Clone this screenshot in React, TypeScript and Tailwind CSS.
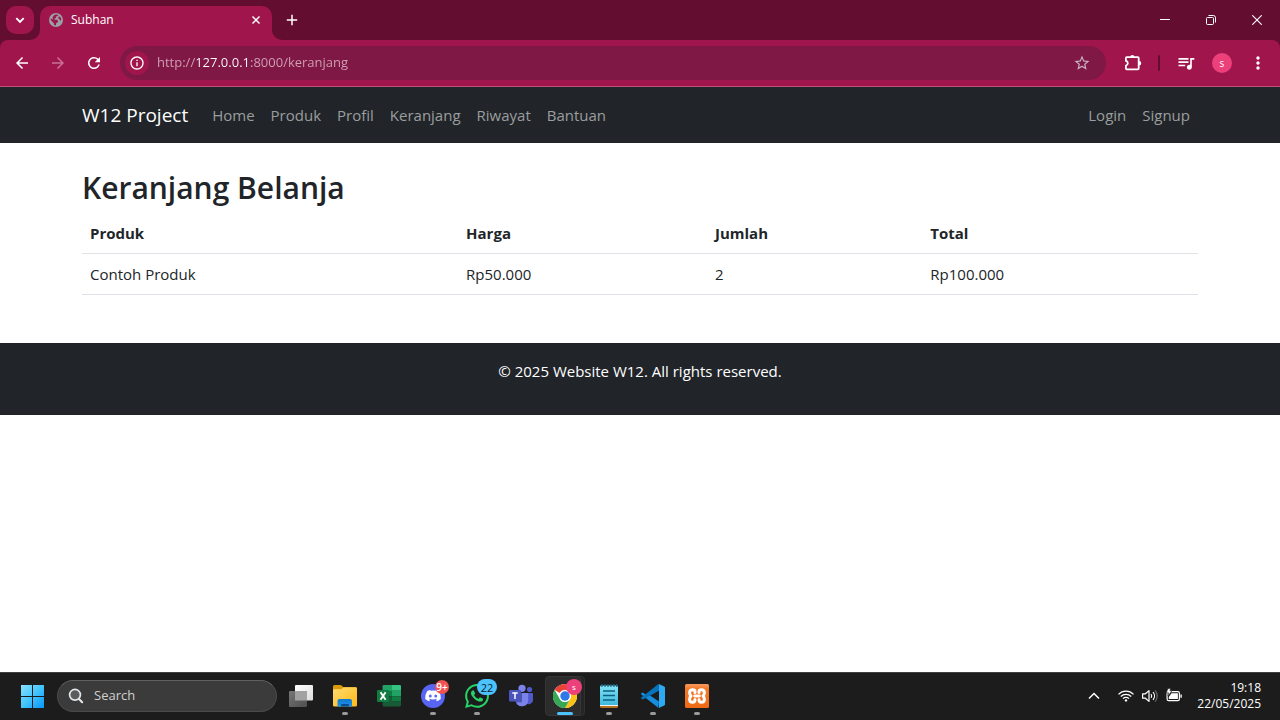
import type { ReactNode } from "react";
import { MdArrowBack, MdArrowForward, MdRefresh, MdInfoOutline, MdStarBorder, MdQueueMusic, MdMoreVert } from "react-icons/md";

function GlobeIcon() {
  return (
    <svg viewBox="0 0 14 14" className="size-3.5 shrink-0" aria-hidden="true">
      <circle cx="7" cy="7" r="7" fill="#9aa0a6" />
      <path
        d="M7.4 1.4 9.2 1.7 8.6 3.2 6.8 3.6 7 5 5.4 5.8 5.6 6.8 8.2 6.8 9.2 8.2 8.2 9.8 7.2 10 7 12.4 5.2 12 4.8 10.2 1.7 6.9 1.9 5.4 4 6.4 3.4 4.4 5.4 1.8ZM9.4 4 11 3.4 12.4 6 11.8 7.4 10.6 7.2 10.4 5.8 9.2 5.4Z"
        fill="#a1154d"
      />
    </svg>
  );
}

function PuzzleIcon() {
  return (
    <svg viewBox="0 0 20 20" className="size-5" fill="none" stroke="currentColor" aria-hidden="true">
      <path
        d="M4.7 4.2H15.8Q16.7 4.2 16.7 5.1V15.4Q16.7 16.3 15.8 16.3H4.7Q3.9 16.3 3.9 15.4V12.6A2.4 2.4 0 0 0 3.9 7.9V5.1Q3.9 4.2 4.7 4.2Z"
        strokeWidth="1.8"
        strokeLinejoin="round"
      />
      <path d="M8.2 4A2.1 2.1 0 0 1 12.4 4ZM17 8A2.2 2.2 0 0 1 17 12.5Z" fill="currentColor" stroke="none" />
    </svg>
  );
}

function WindowsIcon() {
  return (
    <svg viewBox="0 0 24 24" className="size-6" aria-hidden="true">
      <defs>
        <linearGradient id="win" x1="0" y1="0" x2="24" y2="24" gradientUnits="userSpaceOnUse">
          <stop stopColor="#8fe3ff" />
          <stop offset=".5" stopColor="#45c6fd" />
          <stop offset="1" stopColor="#0796fb" />
        </linearGradient>
      </defs>
      <path d="M1 1h11v11H1zM13 1h11v11H13zM1 13h11v11H1zM13 13h11v11H13z" fill="url(#win)" />
    </svg>
  );
}

function SearchIcon() {
  return (
    <svg viewBox="0 0 16 16" className="size-4" fill="none" stroke="#e4e6e8" aria-hidden="true">
      <circle cx="7" cy="6.8" r="5.4" fill="#5a5c5e" strokeWidth="1.7" />
      <path d="m11 11 3.2 3.3" strokeWidth="2" strokeLinecap="round" />
    </svg>
  );
}

function TaskViewIcon() {
  return (
    <svg viewBox="0 0 24 24" className="size-6" aria-hidden="true">
      <defs>
        <linearGradient id="tvw" x1="0" y1="0" x2="1" y2="1">
          <stop stopColor="#fff" />
          <stop offset="1" stopColor="#dcdcdc" />
        </linearGradient>
        <linearGradient id="tvg" x1="0" y1="0" x2="1" y2="1">
          <stop stopColor="#777" />
          <stop offset="1" stopColor="#4e4e4e" />
        </linearGradient>
      </defs>
      <rect x="6" y="1" width="18" height="15.5" rx="1" fill="url(#tvw)" />
      <rect y="7" width="18" height="16" rx="1" fill="url(#tvg)" />
      <path d="M6 7h12v9.5H6z" fill="#a2a2a2" />
    </svg>
  );
}

function FolderIcon() {
  return (
    <svg viewBox="0 0 24 24" className="size-6" aria-hidden="true">
      <defs>
        <linearGradient id="fold" x1="0" y1="0" x2="1" y2="1">
          <stop stopColor="#ffdc70" />
          <stop offset="1" stopColor="#fcb917" />
        </linearGradient>
        <linearGradient id="foldb" x1="0" y1="0" x2="0" y2="1">
          <stop stopColor="#0f78d0" />
          <stop offset="1" stopColor="#2192e4" />
        </linearGradient>
      </defs>
      <path d="M0 8V2.5Q0 1 1.5 1H7.4Q8 1 8.5 1.5L10.5 3.3H22.5Q24 3.3 24 4.8V8Z" fill="#dc9a0b" />
      <path d="M0 6.2Q0 5.2 1 5.2H8.5L10.5 3.3H22.7Q24 3.3 24 4.6V21.3Q24 22.6 22.7 22.6H1.3Q0 22.6 0 21.3Z" fill="url(#fold)" />
      <path d="M4.5 22.6V17Q4.5 15 6.5 15H17Q19 15 19 17V22.6Z" fill="url(#foldb)" />
      <path d="M8 22.6V21Q8 20 9 20H15Q16 20 16 21V22.6Z" fill="#0a4d91" />
    </svg>
  );
}

function ExcelIcon() {
  return (
    <svg viewBox="0 0 24 24" className="size-6" aria-hidden="true">
      <path d="M7 1H15V12H5.6V2.3Q5.6 1 7 1Z" fill="#21a366" />
      <path d="M15 1H22.7Q24 1 24 2.3V6.8H15Z" fill="#33c481" />
      <path d="M15 6.8h9v5.4h-9z" fill="#21a366" />
      <path d="M5.6 6.8H15v5.4H5.6z" fill="#107c41" />
      <path d="M15 12.2h9v5.4h-9z" fill="#107c41" />
      <path d="M5.6 12.2H15V17.6H24V21.3Q24 22.6 22.7 22.6H7Q5.6 22.6 5.6 21.3Z" fill="#185c37" />
      <rect y="6" width="12" height="12" rx="1" fill="#107c41" />
      <path d="M3.5 8.3 8.6 15.7M8.6 8.3 3.5 15.7" stroke="#fff" strokeWidth="1.9" />
    </svg>
  );
}

function DiscordIcon() {
  return (
    <svg viewBox="0 0 24 24" className="size-6" aria-hidden="true">
      <circle cx="12" cy="12" r="12" fill="#5865f2" />
      <path
        d="M9.7 6.7 9.3 6Q7.4 6.3 6.2 7Q4 10.4 4.2 15.1 5.8 16.6 8.2 17.2L9.1 15.7 7.8 15.1 8.2 14.8Q12 16.4 15.8 14.8L16.2 15.1 14.9 15.7 15.8 17.2Q18.2 16.6 19.8 15.1 20 10.4 17.8 7 16.6 6.3 14.7 6L14.3 6.7Q12 6.3 9.7 6.7Z"
        fill="#fff"
      />
      <ellipse cx="9.3" cy="12" rx="1.4" ry="1.6" fill="#5865f2" />
      <ellipse cx="14.7" cy="12" rx="1.4" ry="1.6" fill="#5865f2" />
    </svg>
  );
}

function WhatsAppIcon() {
  return (
    <svg viewBox="0 0 24 24" className="size-6" aria-hidden="true">
      <path
        d="M17.472 14.382c-.297-.149-1.758-.867-2.03-.967-.273-.099-.471-.148-.67.15-.197.297-.767.966-.94 1.164-.173.199-.347.223-.644.075-.297-.15-1.255-.463-2.39-1.475-.883-.788-1.48-1.761-1.653-2.059-.173-.297-.018-.458.13-.606.134-.133.298-.347.446-.52.149-.174.198-.298.298-.497.099-.198.05-.371-.025-.52-.075-.149-.669-1.612-.916-2.207-.242-.579-.487-.5-.669-.51-.173-.008-.371-.01-.57-.01-.198 0-.52.074-.792.372-.272.297-1.04 1.016-1.04 2.479 0 1.462 1.065 2.875 1.213 3.074.149.198 2.096 3.2 5.077 4.487.709.306 1.262.489 1.694.625.712.227 1.36.195 1.871.118.571-.085 1.758-.719 2.006-1.413.248-.694.248-1.289.173-1.413-.074-.124-.272-.198-.57-.347m-5.421 7.403h-.004a9.87 9.87 0 01-5.031-1.378l-.361-.214-3.741.982.998-3.648-.235-.374a9.86 9.86 0 01-1.51-5.26c.001-5.45 4.436-9.884 9.888-9.884 2.64 0 5.122 1.03 6.988 2.898a9.825 9.825 0 012.893 6.994c-.003 5.45-4.437 9.884-9.885 9.884m8.413-18.297A11.815 11.815 0 0012.05 0C5.495 0 .16 5.335.157 11.892c0 2.096.547 4.142 1.588 5.945L.057 24l6.305-1.654a11.882 11.882 0 005.683 1.448h.005c6.554 0 11.89-5.335 11.893-11.893a11.821 11.821 0 00-3.48-8.413z"
        fill="#25d366"
      />
    </svg>
  );
}

function TeamsIcon() {
  return (
    <svg viewBox="0 0 24 24" className="size-6" aria-hidden="true">
      <circle cx="20.5" cy="5.5" r="2.6" fill="#5059c9" />
      <path d="M15 9H23Q24 9 24 10V15.5A4.2 4.2 0 0 1 15.6 16.5Z" fill="#5059c9" />
      <circle cx="13" cy="4.3" r="3.6" fill="#7b83eb" />
      <path d="M6.8 9H18.4Q19.2 9 19.2 9.8V16.2A6.3 6.3 0 0 1 6.8 17.5Z" fill="#7b83eb" />
      <path d="M6.8 9H13V18.2H6.9Z" fill="#4d55b2" />
      <rect y="6" width="12" height="11.5" rx="1" fill="#4b53bc" />
      <path d="M3.3 9.1H8.7M6 9.1V15" stroke="#fff" strokeWidth="1.5" />
    </svg>
  );
}

function ChromeIcon() {
  return (
    <svg viewBox="0 0 24 24" className="size-6" aria-hidden="true">
      <circle cx="12" cy="12" r="12" fill="#fff" />
      <path d="M12 0A12 12 0 0 1 22.4 6H12A6 6 0 0 0 6.8 9L1.6 6A12 12 0 0 1 12 0Z" fill="#ea4335" />
      <path d="M22.4 6A12 12 0 0 1 12 24L17.2 15A6 6 0 0 0 17.2 9L12 6Z" fill="#fbc116" />
      <path d="M12 24A12 12 0 0 1 1.6 6L6.8 15A6 6 0 0 0 17.2 15Z" fill="#34a853" />
      <circle cx="12" cy="12" r="6" fill="#fff" />
      <circle cx="12" cy="12" r="4.7" fill="#2e78ea" />
    </svg>
  );
}

function NotepadIcon() {
  return (
    <svg viewBox="0 0 24 24" className="size-6" aria-hidden="true">
      <defs>
        <linearGradient id="note" x1="0" y1="0" x2="0" y2="1">
          <stop stopColor="#83e3f4" />
          <stop offset="1" stopColor="#3fb9dc" />
        </linearGradient>
      </defs>
      <path d="M3 19H21V22.5Q21 24 19.5 24H4.5Q3 24 3 22.5Z" fill="#b5701d" />
      <path d="M3 19h18v3H3z" fill="#f2f3f4" />
      <path d="M4.3 1.5H19.7Q21 1.5 21 2.8V21H3V2.8Q3 1.5 4.3 1.5Z" fill="url(#note)" />
      <path d="M5 0V3M8 0V3M11 0V3M14 0V3M17 0V3M19.7 0V3" stroke="#12678a" strokeWidth="1.2" />
      <path d="M6 7H18M6 11.5H18M6 16H18" stroke="#0b5f86" strokeWidth="1.7" />
    </svg>
  );
}

function VsCodeIcon() {
  return (
    <svg viewBox="0 0 24 24" className="size-6" aria-hidden="true">
      <path d="M17.4.2 5.6 11.3 1.9 8.5.3 9.3Q-.2 9.8.3 10.4L17.2 23.8 18 17.6 9 11.5 18 6.3Z" fill="#168edb" />
      <path d="M17.4.2 5.6 11.3 0 15.5.3 13.6 1.9 15.5 18 6.3V0Z" fill="none" />
      <path d="M17.2.2.3 13.6Q-.2 14.2.3 14.7L1.9 15.5 18 6.4Z" fill="#0873bd" />
      <path d="M17.2.2Q17.8-.1 18.4.2L23.2 2.5Q24 2.9 24 3.8V20.2Q24 21.1 23.2 21.5L18.4 23.8Q17.8 24.1 17.2 23.8 18 23.7 18 22.7V1.3Q18 .3 17.2.2Z" fill="#2eaaf3" />
    </svg>
  );
}

function XamppIcon() {
  return (
    <svg viewBox="0 0 24 24" className="size-6" aria-hidden="true">
      <defs>
        <linearGradient id="xam" x1="0" y1="0" x2="0" y2="1">
          <stop stopColor="#f79a5e" />
          <stop offset=".2" stopColor="#f37a2b" />
          <stop offset="1" stopColor="#ee6a14" />
        </linearGradient>
      </defs>
      <rect width="24" height="24" rx="1.5" fill="url(#xam)" />
      <g fill="none" stroke="#fff" strokeWidth="3" strokeLinecap="round" strokeLinejoin="round">
        <path d="M10 8.6V7.6Q10 5.8 7.6 5.8 4.6 5.8 4.6 8.8 4.6 10.8 6 12 4.6 13.2 4.6 15.2 4.6 18.2 7.6 18.2 10 18.2 10 16V15.4" />
        <path d="M14 8.6V7.6Q14 5.8 16.4 5.8 19.4 5.8 19.4 8.8 19.4 10.8 18 12 19.4 13.2 19.4 15.2 19.4 18.2 16.4 18.2 14 18.2 14 16V15.4" />
        <path d="M9.6 12H14.4" strokeWidth="2.8" />
      </g>
    </svg>
  );
}

type TaskItemProps = { label: string; icon: ReactNode; state?: "idle" | "open" | "active"; badge?: ReactNode };

function TaskItem({ label, icon, state = "idle", badge }: TaskItemProps) {
  return (
    <button type="button" aria-label={label} className="relative flex h-12 w-11 items-center justify-center">
      {state === "active" && (
        <>
          <span className="absolute top-1 right-0.5 bottom-1 left-6 rounded-sm border border-[#303030] bg-[#252525]" />
          <span className="absolute top-1 right-1.5 bottom-1 left-0.5 rounded-sm border border-[#363636] bg-[#2c2c2c]" />
        </>
      )}
      <span className="relative">{icon}</span>
      {badge}
      {state === "open" && <span className="absolute bottom-[5px] left-1/2 h-[3px] w-1.5 -translate-x-1/2 rounded-full bg-[#9a9a9a]" />}
      {state === "active" && <span className="absolute bottom-[5px] left-1/2 h-[3px] w-4 -translate-x-1/2 rounded-full bg-[#4cc2ff]" />}
    </button>
  );
}

function TabStrip() {
  return (
    <div className="flex h-10 items-start bg-[#630d31] text-white">
      <button type="button" aria-label="Search tabs" className="mt-1.5 ml-1.5 flex size-7 items-center justify-center rounded-[10px] bg-[#a1154d]">
        <svg viewBox="0 0 10 10" className="size-2.5" fill="none" stroke="currentColor" strokeWidth="1.9" aria-hidden="true">
          <path d="m1.3 3.2 3.7 3.7 3.7-3.7" />
        </svg>
      </button>
      <div className="relative mt-1.5 ml-1.5 flex h-[34px] w-58 items-center rounded-t-[10px] bg-[#a1154d] pr-2 pb-1.5 pl-[9px]">
        <svg viewBox="0 0 10 10" className="absolute bottom-0 -left-2.5 size-2.5" aria-hidden="true">
          <path d="M10 0V10H0A10 10 0 0 0 10 0Z" fill="#a1154d" />
        </svg>
        <svg viewBox="0 0 10 10" className="absolute -right-2.5 bottom-0 size-2.5" aria-hidden="true">
          <path d="M0 0V10H10A10 10 0 0 1 0 0Z" fill="#a1154d" />
        </svg>
        <GlobeIcon />
        <span className="ml-2 flex-1 text-xs">Subhan</span>
        <button type="button" aria-label="Close tab" className="flex size-4 items-center justify-center">
          <svg viewBox="0 0 10 10" className="size-2.5" stroke="currentColor" strokeWidth="1.5" aria-hidden="true">
            <path d="m1.5 1.5 7 7m0-7-7 7" />
          </svg>
        </button>
      </div>
      <button type="button" aria-label="New tab" className="mt-1.5 ml-1.5 flex size-7 items-center justify-center">
        <svg viewBox="0 0 12 12" className="size-3" stroke="currentColor" strokeWidth="1.5" aria-hidden="true">
          <path d="M6 .8v10.4M.8 6h10.4" />
        </svg>
      </button>
      <div className="ml-auto flex h-10">
        <button type="button" aria-label="Minimize" className="flex w-[46px] items-center justify-center">
          <svg viewBox="0 0 10 10" className="size-2.5" stroke="currentColor" aria-hidden="true">
            <path d="M0 4.5h10" />
          </svg>
        </button>
        <button type="button" aria-label="Restore" className="flex w-[46px] items-center justify-center">
          <svg viewBox="0 0 10 10" className="size-2.5" fill="none" stroke="currentColor" aria-hidden="true">
            <rect x=".5" y="2.5" width="7" height="7" rx="1" />
            <path d="M2.5 .5H7.3Q9.5 .5 9.5 2.7V7.5" />
          </svg>
        </button>
        <button type="button" aria-label="Close" className="flex w-[46px] items-center justify-center">
          <svg viewBox="0 0 10 10" className="size-2.5" stroke="currentColor" strokeWidth="1.1" aria-hidden="true">
            <path d="m.3.3 9.4 9.4m0-9.4L.3 9.7" />
          </svg>
        </button>
      </div>
    </div>
  );
}

function Toolbar() {
  return (
    <div className="bg-[#630d31]">
      <div className="flex h-[47px] items-center rounded-t-lg border-b border-[#bd5279] bg-[#a1154d] px-1 text-white">
        <button type="button" aria-label="Back" className="flex size-9 items-center justify-center">
          <MdArrowBack className="size-[18px]" />
        </button>
        <button type="button" aria-label="Forward" disabled className="flex size-9 items-center justify-center text-[#c87094]">
          <MdArrowForward className="size-[18px]" />
        </button>
        <button type="button" aria-label="Reload" className="flex size-9 items-center justify-center">
          <MdRefresh className="size-[18px]" />
        </button>
        <div className="ml-2 flex h-[34px] min-w-0 flex-1 items-center rounded-full bg-[#7f1844] pr-[15px] pl-[5px]">
          <button type="button" aria-label="View site information" className="flex size-6 items-center justify-center rounded-full bg-[#a1154d]">
            <MdInfoOutline className="size-4" />
          </button>
          <input
            type="text"
            aria-label="Address"
            defaultValue="http://127.0.0.1:8000/keranjang"
            className="ml-2 min-w-0 flex-1 bg-[linear-gradient(90deg,#d3a3b7_38px,#fff_38px,#fff_93px,#d3a3b7_93px)] bg-clip-text text-[13px] text-transparent outline-none"
          />
          <button type="button" aria-label="Bookmark this tab" className="text-[#c9b1bc]">
            <MdStarBorder className="size-[18px]" />
          </button>
        </div>
        <button type="button" aria-label="Extensions" className="ml-4 flex size-5 items-center justify-center">
          <PuzzleIcon />
        </button>
        <span className="ml-4 h-4 w-0.5 rounded-full bg-[#630d31]" />
        <button type="button" aria-label="Media controls" className="ml-4 flex size-5 items-center justify-center">
          <MdQueueMusic className="size-5" />
        </button>
        <button type="button" aria-label="Profile" className="ml-4 flex size-5 items-center justify-center rounded-full bg-[#ec407a] text-[10px] leading-none">
          s
        </button>
        <button type="button" aria-label="Menu" className="ml-2 flex size-9 items-center justify-center">
          <MdMoreVert className="size-5" />
        </button>
      </div>
    </div>
  );
}

const menu = ["Home", "Produk", "Profil", "Keranjang", "Riwayat", "Bantuan"];
const account = ["Login", "Signup"];

function NavLinks({ items }: { items: string[] }) {
  return (
    <ul className="flex">
      {items.map((item) => (
        <li key={item}>
          <a href={"#" + item.toLowerCase()} className="block px-2 py-2">
            {item}
          </a>
        </li>
      ))}
    </ul>
  );
}

function Page() {
  return (
    <div className="flex-1 bg-white text-[15px] leading-6 text-[#212529]">
      <nav className="bg-[#212529] py-2 text-[#9b9d9e]">
        <div className="mx-auto flex max-w-[1140px] items-center px-3">
          <a href="#w12" className="mr-4 text-[19px] text-white">
            W12 Project
          </a>
          <NavLinks items={menu} />
          <div className="ml-auto">
            <NavLinks items={account} />
          </div>
        </div>
      </nav>
      <main className="mx-auto mt-6 max-w-[1140px] px-3">
        <h1 className="mb-1 text-[30px] leading-[42px] font-semibold">Keranjang Belanja</h1>
        <table className="w-full table-fixed border-collapse text-left">
          <thead>
            <tr className="border-b border-[#dee2e6]">
              <th className="w-[33.7%] p-2">Produk</th>
              <th className="w-[22.3%] p-2">Harga</th>
              <th className="w-[19.3%] p-2">Jumlah</th>
              <th className="p-2">Total</th>
            </tr>
          </thead>
          <tbody>
            <tr className="border-b border-[#dee2e6]">
              <td className="p-2">Contoh Produk</td>
              <td className="p-2">Rp50.000</td>
              <td className="p-2">2</td>
              <td className="p-2">Rp100.000</td>
            </tr>
          </tbody>
        </table>
      </main>
      <footer className="mt-12 bg-[#212529] px-4 pt-4 pb-8 text-center text-white">
        <p>© 2025 Website W12. All rights reserved.</p>
      </footer>
    </div>
  );
}

function Taskbar() {
  return (
    <div className="flex h-12 items-center bg-[#1c1c1c] pl-2.5 text-white shadow-[inset_0_1px_0_#404040]">
      <button type="button" aria-label="Start" className="flex h-12 w-11 items-center justify-center">
        <WindowsIcon />
      </button>
      <label className="mr-0.5 ml-[3px] flex h-8 w-55 items-center gap-2.5 rounded-full border border-[#4a4a4a] border-t-[#606060] bg-[#3b3b3b] px-2.5">
        <SearchIcon />
        <input type="text" aria-label="Search" placeholder="Search" className="min-w-0 flex-1 text-[13px] outline-none placeholder:text-[#cfcfcf]" />
      </label>
      <TaskItem label="Task view" icon={<TaskViewIcon />} />
      <TaskItem label="File Explorer" icon={<FolderIcon />} state="open" />
      <TaskItem label="Excel" icon={<ExcelIcon />} />
      <TaskItem
        label="Discord"
        icon={<DiscordIcon />}
        state="open"
        badge={<span className="absolute top-2 right-1.5 flex size-3.5 items-center justify-center rounded-full bg-[#f05151] text-[10px] leading-none font-semibold">9+</span>}
      />
      <TaskItem
        label="WhatsApp"
        icon={<WhatsAppIcon />}
        state="open"
        badge={<span className="absolute top-[7px] right-0.5 flex h-4 w-5 items-center justify-center rounded-full bg-[#4cc2ff] text-[11px] leading-none text-[#0b1d28]">22</span>}
      />
      <TaskItem label="Teams" icon={<TeamsIcon />} />
      <TaskItem
        label="Chrome"
        icon={<ChromeIcon />}
        state="active"
        badge={<span className="absolute top-[7px] right-[5px] flex size-4 items-center justify-center rounded-full bg-[#ec407a] text-[8px] leading-none">s</span>}
      />
      <TaskItem label="Notepad" icon={<NotepadIcon />} state="open" />
      <TaskItem label="Visual Studio Code" icon={<VsCodeIcon />} state="open" />
      <TaskItem label="XAMPP" icon={<XamppIcon />} state="open" />
      <div className="mr-[19px] ml-auto flex items-center">
        <button type="button" aria-label="Show hidden icons" className="mr-[18px]">
          <svg viewBox="0 0 12 12" className="size-3" fill="none" stroke="currentColor" strokeWidth="1.5" aria-hidden="true">
            <path d="m1 8.5 5-5 5 5" />
          </svg>
        </button>
        <button type="button" aria-label="Network, volume and battery" className="mr-[15px] flex items-center gap-2">
          <svg viewBox="0 0 16 16" className="size-4" fill="none" stroke="currentColor" strokeWidth="1.2" aria-hidden="true">
            <path d="M.5 6.3A10.3 10.3 0 0 1 15.5 6.3M2.8 8.5A7.2 7.2 0 0 1 13.2 8.5M5 10.6A4.2 4.2 0 0 1 11 10.6" />
            <circle cx="8" cy="12.4" r="1.2" fill="currentColor" stroke="none" />
          </svg>
          <svg viewBox="0 0 16 16" className="size-4" fill="none" stroke="currentColor" strokeWidth="1.2" strokeLinejoin="round" aria-hidden="true">
            <path d="M.6 5.8H3.4L7 2.6V13.4L3.4 10.2H.6ZM9 6.2A3 3 0 0 1 9 9.8M11 4.2A5.6 5.6 0 0 1 11 11.8" />
            <path d="M13 2.4A8.2 8.2 0 0 1 13 13.6" stroke="#6a6a6a" />
          </svg>
          <svg viewBox="0 0 16 16" className="size-4" aria-hidden="true">
            <rect x="1.1" y="3.6" width="12.3" height="9" rx="1.6" fill="none" stroke="currentColor" strokeWidth="1.2" />
            <path d="M2.8 9 5.5 5.3H11.9V11.1H2.8ZM14.4 6.4h1.4v3.4h-1.4z" fill="currentColor" />
            <path d="M2 .6H4.6L4 2.8H6L2 8 2.4 4.8H.2Z" fill="currentColor" stroke="#1c1c1c" strokeWidth=".6" />
          </svg>
        </button>
        <time dateTime="2025-05-22T19:18" className="text-right text-xs leading-4">
          <span className="block">19:18</span>
          <span className="block">22/05/2025</span>
        </time>
      </div>
    </div>
  );
}

export default function App() {
  return (
    <div className="flex min-h-screen flex-col bg-white font-['Open_Sans','Noto_Sans',sans-serif]">
      <TabStrip />
      <Toolbar />
      <Page />
      <Taskbar />
    </div>
  );
}
